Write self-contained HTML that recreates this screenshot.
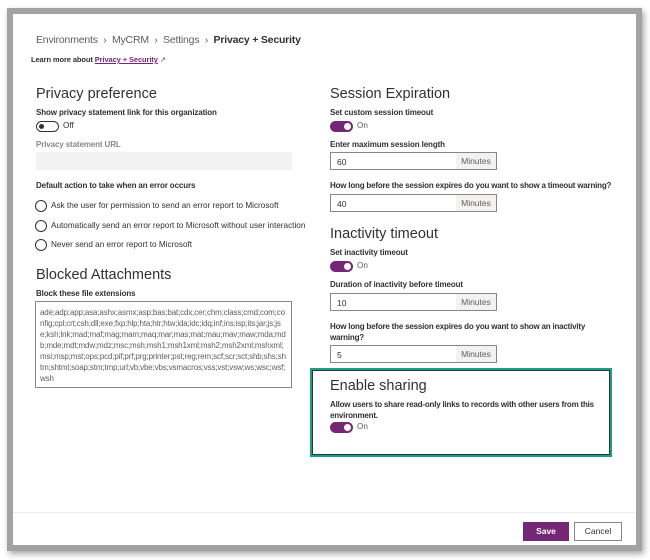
<!DOCTYPE html><html><head><style>
*{margin:0;padding:0;box-sizing:border-box}
body{width:650px;height:560px;background:#fff;font-family:"Liberation Sans",sans-serif;position:relative;overflow:hidden;color:#323130}
.frame{position:absolute;left:7px;top:8px;width:635px;height:543px;border:6px solid #a3a3a3;background:#fff;box-shadow:2px 3px 6px rgba(0,0,0,.35)}
.a{position:absolute;white-space:nowrap}
.h{font-size:14.5px;color:#323130}
.l{font-size:8px;font-weight:bold;color:#323130;letter-spacing:-0.12px}
.g{font-size:8.2px;color:#605e5c}
.tog{position:absolute;width:23px;height:11px;border-radius:6px}
.on{background:#742774}
.on:after{content:"";position:absolute;right:2px;top:2px;width:7px;height:7px;border-radius:50%;background:#fff}
.off{border:1px solid #323130;background:#fff}
.off:after{content:"";position:absolute;left:2px;top:2px;width:5px;height:5px;border-radius:50%;background:#323130}
.inp{position:absolute;width:167px;height:18px;border:1px solid #8a8886;font-size:8.5px;color:#323130}
.inp span{position:absolute;left:6px;top:4px}
.inp b{position:absolute;right:0;top:0;width:40px;height:16px;background:#f3f2f1;font-weight:normal;color:#605e5c;font-size:8.5px;text-align:center;line-height:16px}
.rad{position:absolute;width:12px;height:12px;border:1px solid #323130;border-radius:50%}
</style></head><body>
<div class="frame"></div>
<div class="a" style="left:36px;top:34px;font-size:10.5px;letter-spacing:-0.2px;color:#605e5c">Environments &nbsp;›&nbsp; MyCRM &nbsp;›&nbsp; Settings &nbsp;›&nbsp; <span style="color:#323130;font-weight:bold">Privacy + Security</span></div>
<div class="a" style="left:31px;top:55px;font-size:7.5px;font-weight:bold;letter-spacing:-0.1px">Learn more about <span style="color:#742774;text-decoration:underline">Privacy + Security</span> <span style="font-weight:normal;color:#605e5c">↗</span></div>

<div class="a h" style="left:36px;top:86px">Privacy preference</div>
<div class="a l" style="left:36px;top:108px">Show privacy statement link for this organization</div>
<div class="tog off" style="left:36px;top:121px"></div><div class="a g" style="left:63px;top:121px;color:#323130">Off</div>
<div class="a l" style="left:36px;top:140px;color:#8a8886">Privacy statement URL</div>
<div class="a" style="left:36px;top:152px;width:256px;height:18px;background:#f3f2f1"></div>
<div class="a l" style="left:36px;top:181px">Default action to take when an error occurs</div>
<div class="rad" style="left:35px;top:200px"></div><div class="a g" style="left:51px;top:201px;color:#323130">Ask the user for permission to send an error report to Microsoft</div>
<div class="rad" style="left:35px;top:220px"></div><div class="a g" style="left:51px;top:221px;color:#323130">Automatically send an error report to Microsoft without user interaction</div>
<div class="rad" style="left:35px;top:239px"></div><div class="a g" style="left:51px;top:240px;color:#323130">Never send an error report to Microsoft</div>

<div class="a h" style="left:36px;top:267px">Blocked Attachments</div>
<div class="a l" style="left:36px;top:289px">Block these file extensions</div>
<div class="a" style="left:35px;top:301px;width:257px;height:87px;border:1px solid #8a8886;padding:5px 4px;white-space:normal;word-break:break-all;font-size:8px;letter-spacing:-0.15px;line-height:11px;color:#605e5c">ade;adp;app;asa;ashx;asmx;asp;bas;bat;cdx;cer;chm;class;cmd;com;config;cpl;crt;csh;dll;exe;fxp;hlp;hta;htr;htw;ida;idc;idq;inf;ins;isp;its;jar;js;jse;ksh;lnk;mad;maf;mag;mam;maq;mar;mas;mat;mau;mav;maw;mda;mdb;mde;mdt;mdw;mdz;msc;msh;msh1;msh1xml;msh2;msh2xml;mshxml;msi;msp;mst;ops;pcd;pif;prf;prg;printer;pst;reg;rem;scf;scr;sct;shb;shs;shtm;shtml;soap;stm;tmp;url;vb;vbe;vbs;vsmacros;vss;vst;vsw;ws;wsc;wsf;wsh</div>

<div class="a h" style="left:330px;top:86px">Session Expiration</div>
<div class="a l" style="left:330px;top:108px">Set custom session timeout</div>
<div class="tog on" style="left:330px;top:121px"></div><div class="a g" style="left:357px;top:121px">On</div>
<div class="a l" style="left:330px;top:140px">Enter maximum session length</div>
<div class="inp" style="left:330px;top:152px"><span>60</span><b>Minutes</b></div>
<div class="a l" style="left:330px;top:181px;letter-spacing:-0.2px">How long before the session expires do you want to show a timeout warning?</div>
<div class="inp" style="left:330px;top:194px"><span>40</span><b>Minutes</b></div>
<div class="a h" style="left:330px;top:226px">Inactivity timeout</div>
<div class="a l" style="left:330px;top:248px">Set inactivity timeout</div>
<div class="tog on" style="left:330px;top:261px"></div><div class="a g" style="left:357px;top:261px">On</div>
<div class="a l" style="left:330px;top:280px">Duration of inactivity before timeout</div>
<div class="inp" style="left:330px;top:293px"><span>10</span><b>Minutes</b></div>
<div class="a l" style="left:330px;top:321px;line-height:11px;letter-spacing:-0.2px">How long before the session expires do you want to show an inactivity<br>warning?</div>
<div class="inp" style="left:330px;top:345px"><span>5</span><b>Minutes</b></div>

<div class="a" style="left:310px;top:368px;width:302px;height:89px;border:2px solid #1a9e86;box-shadow:0 0 0 1px #333 inset"></div>
<div class="a h" style="left:330px;top:378px">Enable sharing</div>
<div class="a l" style="left:330px;top:399px;line-height:11px;letter-spacing:-0.2px">Allow users to share read-only links to records with other users from this<br>environment.</div>
<div class="tog on" style="left:330px;top:422px"></div><div class="a g" style="left:357px;top:422px">On</div>

<div class="a" style="left:13px;top:512px;width:622px;height:1px;background:#edebe9"></div>
<div class="a" style="left:523px;top:522px;width:46px;height:19px;background:#742774;color:#fff;font-size:8.5px;font-weight:bold;text-align:center;line-height:19px">Save</div>
<div class="a" style="left:574px;top:522px;width:48px;height:19px;border:1px solid #8a8886;font-size:8.5px;text-align:center;line-height:17px">Cancel</div>
</body></html>
